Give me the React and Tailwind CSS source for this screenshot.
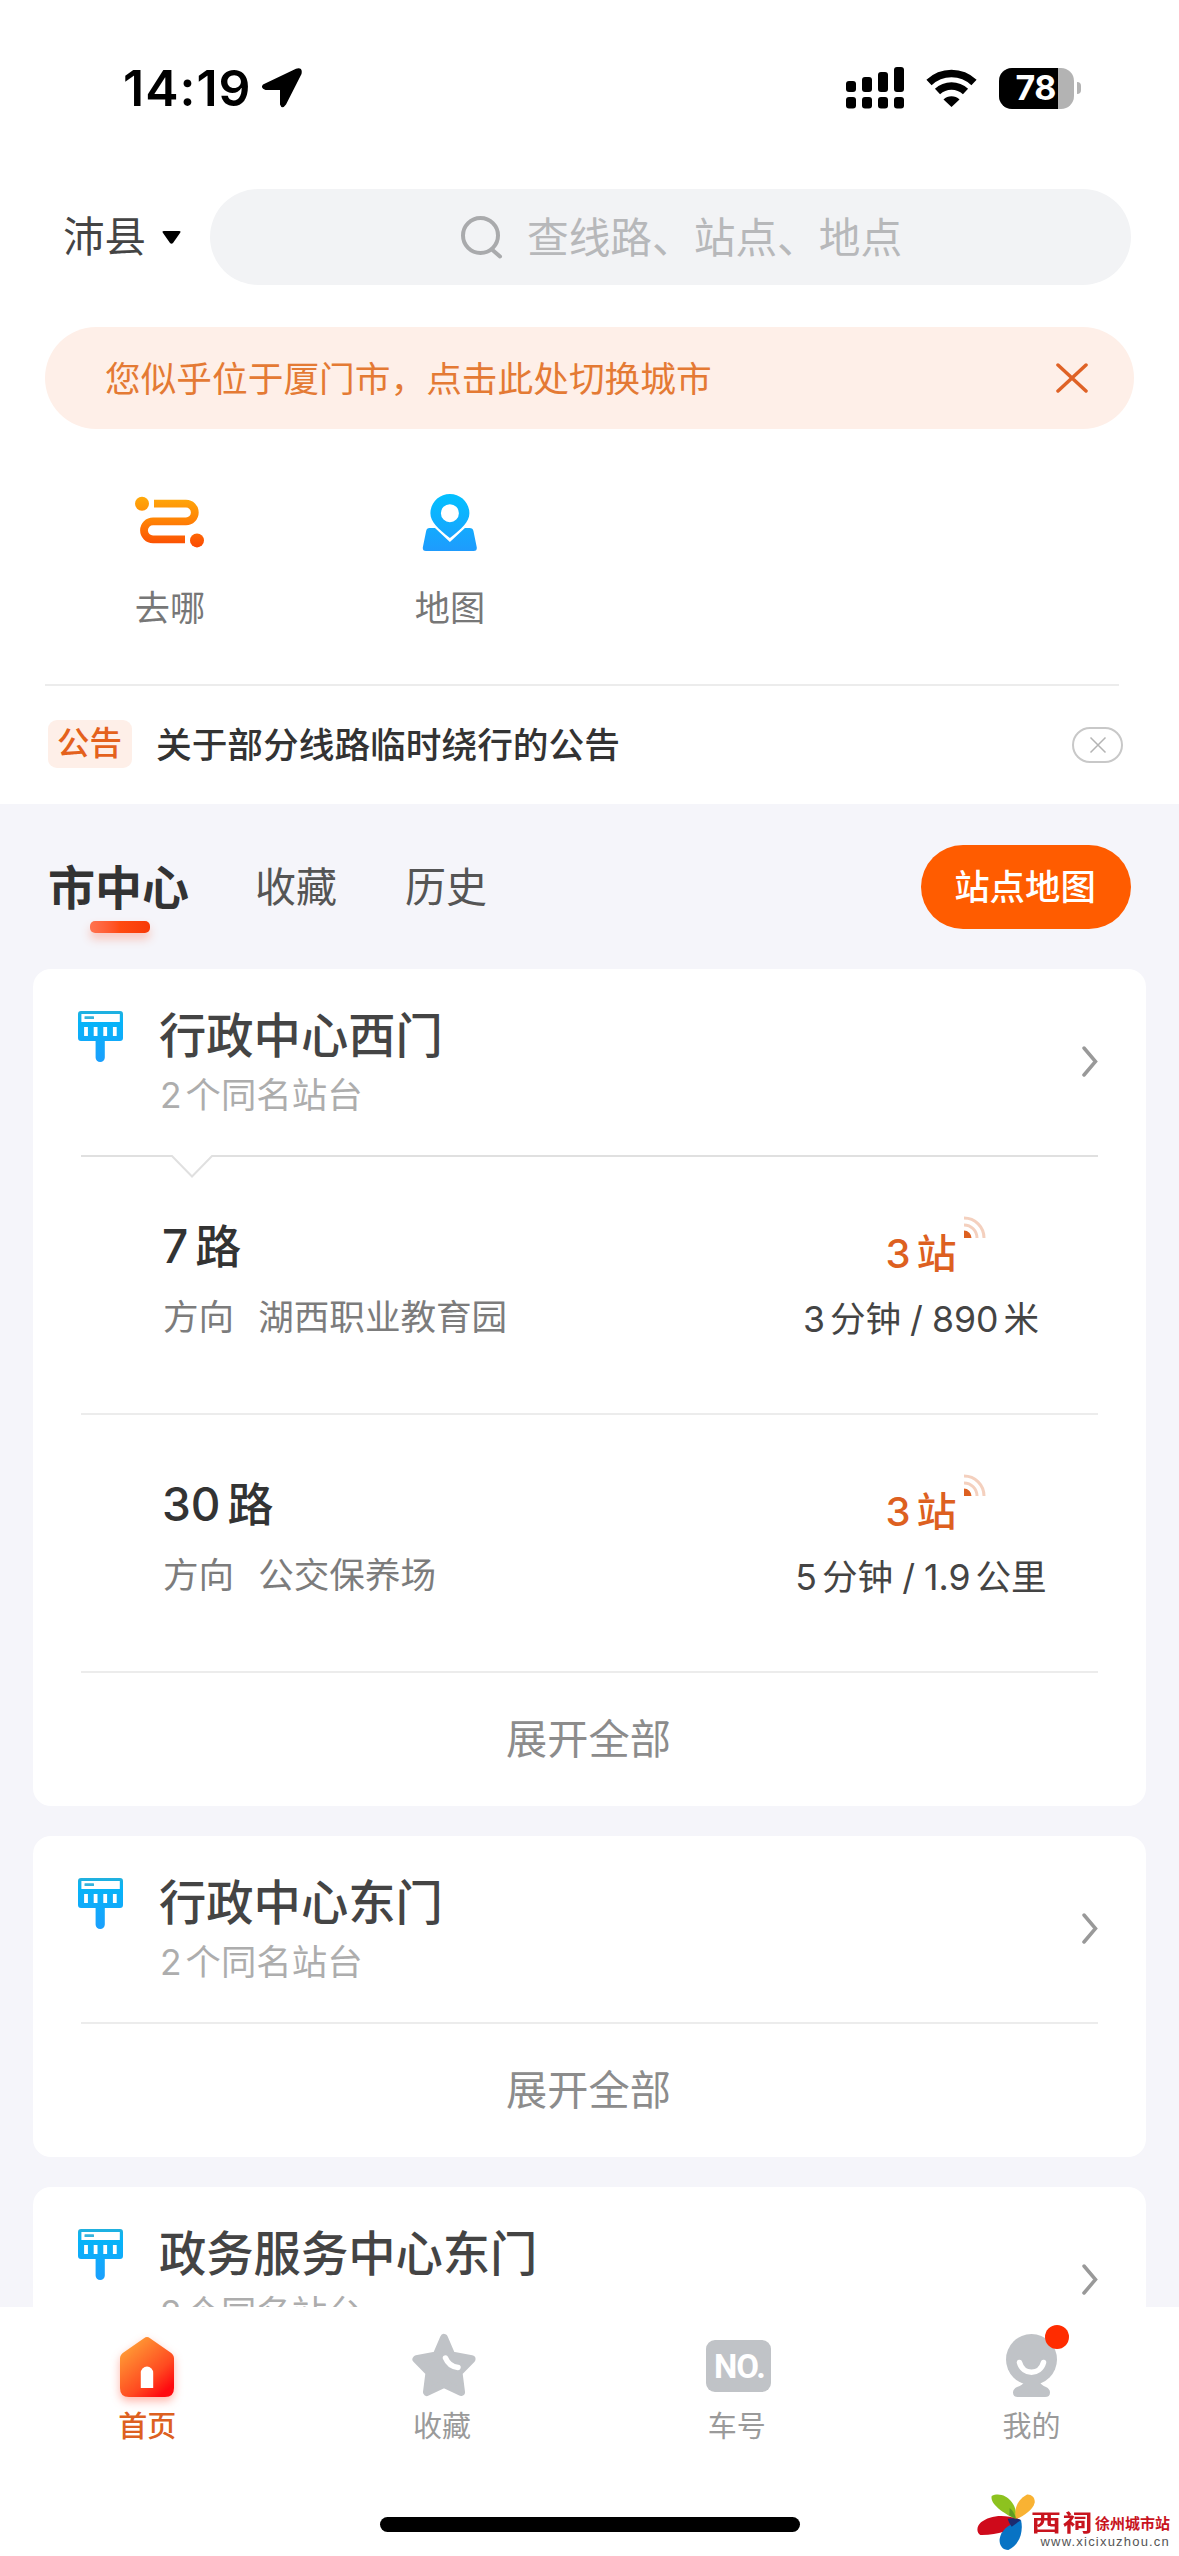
const quickEntries = [
  { label: '去哪', Icon: RouteIcon },
  { label: '地图', Icon: MapIcon },
]

const stations = [
  {
    name: '行政中心西门',
    platforms: '2',
    lines: [
      { no: '7', to: '湖西职业教育园', stops: '3', minutes: '3', distance: '890', unit: '米' },
      { no: '30', to: '公交保养场', stops: '3', minutes: '5', distance: '1.9', unit: '公里' },
    ],
    expandable: true,
  },
  { name: '行政中心东门', platforms: '2', lines: [], expandable: true },
  { name: '政务服务中心东门', platforms: '2', lines: [], expandable: false },
]

const navItems = [
  { label: '首页', Icon: HomeIcon, active: true },
  { label: '收藏', Icon: StarIcon },
  { label: '车号', Icon: NumberIcon },
  { label: '我的', Icon: ProfileIcon, dot: true },
]

function RouteIcon() {
  return (
    <svg width="72" height="58" viewBox="134 493 72 58" fill="none">
      <defs>
        <linearGradient id="route" gradientUnits="userSpaceOnUse" x1="0" y1="497" x2="0" y2="547">
          <stop offset="0" stopColor="#ffa90a" />
          <stop offset="0.5" stopColor="#ff8005" />
          <stop offset="1" stopColor="#fb4a03" />
        </linearGradient>
      </defs>
      <circle cx="142" cy="503.7" r="7" fill="url(#route)" />
      <circle cx="197" cy="540.4" r="7" fill="url(#route)" />
      <path d="M154 503.7H186a8.8 8.8 0 0 1 0 17.6H153a9 9 0 0 0 0 18H185" stroke="url(#route)" strokeWidth="7.8" />
    </svg>
  )
}

function MapIcon() {
  return (
    <svg width="56" height="58" viewBox="421.5 493 56 58" fill="none">
      <defs>
        <linearGradient id="map" gradientUnits="userSpaceOnUse" x1="0" y1="494" x2="0" y2="551">
          <stop offset="0" stopColor="#02c0ff" />
          <stop offset="1" stopColor="#1f9bfd" />
        </linearGradient>
      </defs>
      <path d="M430 528h4.500L449.400 542l15-14h4.600q3.400 0 4 3.200l3.300 16.300q.3 3.500-3.200 3.500h-47.600q-3.500 0-3.200-3.500l3.300-16.300q.6-3.200 3.400-3.200z" fill="url(#map)" />
      <path
        fillRule="evenodd"
        d="M449.400 494c10.800 0 19.500 8.600 19.500 19.200 0 9-8 15.500-19.500 24.800-11.500-9.300-19.500-15.800-19.500-24.800 0-10.600 8.700-19.200 19.500-19.200zm0 10.200a9 9 0 1 0 0 18 9 9 0 0 0 0-18z"
        fill="url(#map)"
      />
    </svg>
  )
}

function StopIcon() {
  return (
    <svg className="mt-[42px] shrink-0" width="45" height="51" viewBox="0 0 45 51">
      <defs>
        <linearGradient id="stop" x1="0" y1="0" x2="0" y2="1">
          <stop offset="0" stopColor="#22b0dd" />
          <stop offset="0.2" stopColor="#06b4f8" />
          <stop offset="1" stopColor="#1b9ffd" />
        </linearGradient>
      </defs>
      <path d="M3 0h39q3 0 3 3v24q0 3-3 3H26.800v16.500a4.600 4.500 0 0 1-9.200 0V30H3q-3 0-3-3V3q0-3 3-3z" fill="url(#stop)" />
      <rect x="3.400" y="3" width="38.400" height="8" fill="#fff" />
      <rect x="6.500" y="5.300" width="9.500" height="2.800" rx="0.500" fill="#35b3dc" />
      {[6.1, 15.7, 25.3, 34.9].map((x) => (
        <rect key={x} x={x} y="16" width="3.800" height="9" fill="#fff" />
      ))}
    </svg>
  )
}

function HomeIcon() {
  return (
    <svg className="overflow-visible" width="54" height="64" viewBox="0 0 54 64">
      <defs>
        <linearGradient id="home" x1="0.200" y1="0.100" x2="0.900" y2="1">
          <stop offset="0" stopColor="#ff9a35" />
          <stop offset="0.600" stopColor="#ff4a20" />
          <stop offset="0.900" stopColor="#ff0a10" />
        </linearGradient>
      </defs>
      <path
        className="drop-shadow-[0_4px_5px_rgba(255,70,40,0.4)]"
        d="M24 5.200q3-2.400 6 0L50.500 19.500q3.500 2.500 3.500 6V55q0 9-9 9H9q-9 0-9-9V25.500q0-3.500 3.500-6z"
        fill="url(#home)"
      />
      <path d="M20.800 55V39.800a6.200 6.200 0 0 1 12.400 0V55z" fill="#fff" />
    </svg>
  )
}

function StarIcon() {
  return (
    <svg className="ml-1" width="64" height="64" viewBox="0 0 64 64" fill="none">
      <path
        d="M32 5L39.500 22.500 59.500 26.300 46.500 39.500 49 59 32 51 15 59 17.500 39.500 4.500 26.300 24.500 22.500z"
        fill="#c0c3c7"
        stroke="#c0c3c7"
        strokeWidth="8"
        strokeLinejoin="round"
      />
      <path d="M33.500 25q3.500 8.500 12.500 9.500" stroke="#fff" strokeWidth="5.500" strokeLinecap="round" />
    </svg>
  )
}

function NumberIcon() {
  return (
    <div className="mb-[5px] ml-[3px] flex h-[52px] w-[65px] items-center justify-center rounded-[9px] bg-[#c0c3c7] pl-[2px] font-['Roboto','Inter',sans-serif] text-[33px] leading-none font-bold tracking-[-1px] text-white">
      NO.
    </div>
  )
}

function ProfileIcon() {
  return (
    <svg width="51" height="63" viewBox="0 0 51 63" fill="none">
      <circle cx="25.500" cy="25.500" r="25.500" fill="#c0c3c7" />
      <path d="M18 48h16q1 3 6 5 4 2 4 5.500 0 4.500-5 4.500H12q-5 0-5-4.500Q7 55 11 53q6-2 7-5z" fill="#c0c3c7" />
      <path d="M13.500 28.500c3.500 13 20.500 13 24 0" stroke="#fff" strokeWidth="5.500" strokeLinecap="round" />
    </svg>
  )
}

function StatusBar() {
  return (
    <div className="flex h-[176px] items-center pr-[98px] pl-[123px]">
      <span className="w-[139px] text-[50px] leading-none font-semibold tracking-[1px] text-black">14:19</span>
      <svg width="40" height="40" viewBox="0 0 40 40">
        <path d="M34 .7Q41-1 39.500 6L24 36.500Q20 42 18 36.500V22H3.500Q-2 20 1 16.500z" />
      </svg>
      <svg className="ml-auto" width="58" height="42" viewBox="0 0 58 42">
        {[
          [0, 14],
          [16, 10],
          [32, 5],
          [48, 0],
        ].map(([x, y]) => (
          <g key={x}>
            <rect x={x} y={y} width="10" height={25 - y} rx="3" />
            <rect x={x} y="30" width="10" height="11.500" rx="3" />
          </g>
        ))}
      </svg>
      <svg className="ml-[22px]" width="51" height="38" viewBox="0 0 51 38" fill="none">
        <path d="M3 13.500a32.500 32.500 0 0 1 45 0" stroke="#000" strokeWidth="7.500" />
        <path d="M11.500 22.500a20.500 20.500 0 0 1 28 0" stroke="#000" strokeWidth="7.500" />
        <path d="M17.500 30.500a11.500 11.500 0 0 1 16 0L25.500 38z" fill="#000" />
      </svg>
      <div className="ml-[22px] flex h-[41px] w-[75px] items-center overflow-hidden rounded-[13px] bg-[#b3b3b3]">
        <div className="flex h-full w-[59px] items-center justify-end bg-black pr-0.5 text-[34px] leading-none font-bold tracking-[-0.5px] text-white">
          78
        </div>
      </div>
      <div className="ml-[3px] h-3 w-1 rounded-r-full bg-[#b3b3b3]" />
    </div>
  )
}

function SearchRow() {
  return (
    <div className="mt-[13px] flex h-24 items-center pr-12 pl-[63px]">
      <span className="pt-[2px] text-[41.500px] leading-none text-[#444]">沛县</span>
      <svg className="ml-4" width="19" height="13" viewBox="0 0 19 13">
        <path d="M2 0h15q2.500 0 1 2L11 12q-1.500 1.500-3 0L1 2Q-.5 0 2 0z" />
      </svg>
      <div className="ml-auto flex h-24 w-[921px] items-center rounded-full bg-[#f2f3f5] pl-[251px]">
        <svg width="42" height="43" viewBox="0 0 42 43" fill="none" stroke="#a9aaac" strokeWidth="4">
          <circle cx="19.500" cy="19.500" r="17.500" />
          <path d="M31.500 34l7.500 6.500" strokeLinecap="round" />
        </svg>
        <span className="ml-6 pt-[3px] text-[41.700px] leading-none text-[#b7b8ba]">查线路、站点、地点</span>
      </div>
    </div>
  )
}

function CityBanner() {
  return (
    <div className="mt-[42px] mr-[45px] ml-[45px] flex h-[102px] items-center justify-between rounded-full bg-[#feefe8] pr-[46px] pl-[60px]">
      <span className="pt-[3px] text-[35.700px] leading-none text-[#e47a34]">您似乎位于厦门市，点击此处切换城市</span>
      <svg width="32" height="30" viewBox="0 0 32 30" stroke="#df6226" strokeWidth="3.500" strokeLinecap="round">
        <path d="M2 2l28 26M30 2L2 28" />
      </svg>
    </div>
  )
}

function Notice() {
  return (
    <div className="flex h-[118px] items-center pr-14 pl-12">
      <span className="mb-[2px] flex h-12 w-[84px] items-center justify-center rounded-[9px] bg-[#feefe8] pr-px text-[32.500px] leading-none font-medium text-[#e4611c]">
        公告
      </span>
      <span className="ml-6 pt-[2px] text-[35.700px] leading-none font-medium text-[#333]">关于部分线路临时绕行的公告</span>
      <span className="ml-auto flex h-9 w-[51px] items-center justify-center rounded-full border-2 border-[#c8c8c8]">
        <svg width="18" height="18" viewBox="0 0 18 18" stroke="#b4b4b4" strokeWidth="1.500">
          <path d="M1.500 1.500l15 15M16.500 1.500l-15 15" />
        </svg>
      </span>
    </div>
  )
}

function Tabs() {
  return (
    <div className="flex h-[165px] items-center pr-12 pl-12 text-[41px] leading-none text-[#555]">
      <span className="relative pt-[2px] text-[47px] font-bold text-[#333]">
        市中心
        <span className="absolute top-[59px] left-[42px] h-3 w-[60px] rounded-[5px] bg-linear-to-r from-[#ff7350] via-[#ff4a10] to-[#f73a08] shadow-[0_6px_10px_rgba(255,90,50,0.3)]" />
      </span>
      <span className="ml-[66px] pt-[2px]">收藏</span>
      <span className="ml-[68px] pt-[2px]">历史</span>
      <button type="button" className="ml-auto h-[84px] w-[210px] rounded-full bg-[#ff5c00] pt-[3px] pr-[2px] text-[35.400px] leading-none font-medium text-white">
        站点地图
      </button>
    </div>
  )
}

function LineRow({ line }) {
  return (
    <div className="mr-12 ml-12 flex h-[258px] border-b-2 border-[#ececec] pl-[81px]">
      <div className="pt-[59px]">
        <p className="flex items-center gap-[7px] text-[46px] leading-[60px] font-medium text-[#333]">
          <span>{line.no}</span>
          <span>路</span>
        </p>
        <p className="mt-[17px] flex gap-6 pl-px text-[35.600px] leading-[50px] text-[#7c7c7c]">
          <span>方向</span>
          <span>{line.to}</span>
        </p>
      </div>
      <div className="ml-auto w-[354px] pt-[72px] text-center">
        <p className="relative flex items-center justify-center gap-1.5 text-[40px] leading-[50px] font-medium text-[#dd6020]">
          <span>{line.stops}</span>
          <span>站</span>
          <svg className="absolute top-[-13px] left-[220px]" width="22" height="22" viewBox="0 0 22 22" fill="none">
            <path d="M0 14.500A7.500 7.500 0 0 1 7.500 22H0z" fill="#dd6020" />
            <path d="M0 9a13 13 0 0 1 13 13M0 2a20 20 0 0 1 20 20" stroke="#f4d0be" strokeWidth="3" />
          </svg>
        </p>
        <p className="mt-4 flex justify-center gap-[5px] text-[35.600px] leading-[50px] text-[#444]">
          <span>{line.minutes}</span>
          <span>分钟</span>
          <span className="mx-1">/</span>
          <span>{line.distance}</span>
          <span>{line.unit}</span>
        </p>
      </div>
    </div>
  )
}

function StationCard({ station }) {
  const hasLines = station.lines.length > 0

  return (
    <section className="mb-[30px] rounded-[18px] bg-white">
      <div className="flex h-[186px] pr-12 pl-[45px]">
        <StopIcon />
        <div className="ml-9 pt-[37px]">
          <h2 className="text-[47.300px] leading-[60px] font-medium text-[#444]">{station.name}</h2>
          <p className="mt-[10px] flex gap-1 pl-px text-[35.400px] leading-10 text-[#adadad]">
            <span>{station.platforms}</span>
            <span>个同名站台</span>
          </p>
        </div>
        <svg className="mt-[77px] ml-auto" width="16" height="31" viewBox="0 0 16 31" fill="none">
          <path d="M2 2l11.500 13.500L2 29" stroke="#999" strokeWidth="3.500" strokeLinecap="round" />
        </svg>
      </div>
      {hasLines ? (
        <svg className="-mb-[21px] ml-12 block" width="1017" height="23" viewBox="0 0 1017 23" fill="none">
          <path d="M0 1h91l20 20.500L131 1h886" stroke="#e0e0e0" strokeWidth="2" />
        </svg>
      ) : (
        <div className="mx-12 h-0.5 bg-[#ececec]" />
      )}
      {station.lines.map((line) => (
        <LineRow key={line.no} line={line} />
      ))}
      {station.expandable && (
        <div className="flex h-[133px] items-center justify-center pr-[2px] text-[41.200px] leading-none text-[#8c8c8c]">展开全部</div>
      )}
    </section>
  )
}

function BottomNav() {
  return (
    <nav className="h-[249px] bg-white">
      <div className="grid grid-cols-4 pt-[26px]">
        {navItems.map(({ label, Icon, active, dot }) => (
          <div key={label} className="flex flex-col items-center">
            <div className="relative flex h-16 items-end">
              <Icon />
              {dot && <span className="absolute -top-2 left-[39px] size-6 rounded-full bg-[#ff2c00]" />}
            </div>
            <span
              className={
                active
                  ? 'mt-[10px] text-[29px] leading-10 font-medium text-[#dd6020]'
                  : 'mt-[10px] text-[29px] leading-10 text-[#9a9a9a]'
              }
            >
              {label}
            </span>
          </div>
        ))}
      </div>
      <div className="mx-auto mt-[70px] h-[15px] w-[420px] rounded-full bg-black" />
    </nav>
  )
}

function SiteMark() {
  return (
    <div className="absolute right-[9px] bottom-0 flex h-[68px] items-start">
      <svg className="mt-1 mr-[-4px]" width="58" height="60" viewBox="20 36 174 180">
        <path d="M137 118C100 100 58 72 64 48c20-10 45-2 60 18 12 16 16 34 13 52z" fill="#8dc21f" />
        <path d="M137 118c-8-30 5-60 32-74 14-2 26 10 24 24-6 22-28 36-56 50z" fill="#f9b233" />
        <path d="M150 120c-20 28-60 46-120 45-12-8-12-26 2-38 26-22 74-26 118-7z" fill="#cf0a1b" />
        <path d="M152 120c8 34-4 74-38 90-18 0-28-14-26-34 4-24 26-44 64-56z" fill="#0873c4" />
        <path d="M112 116q20-4 40 4-14 10-28 20-8-10-12-24z" fill="#1c2a6e" />
        <path d="M118 84q14 10 19 34l-20-12z" fill="#5f9a22" />
      </svg>
      <div className="mt-6 flex w-[139px] flex-col">
        <div className="flex h-[22px] items-center text-[#c8141e]">
          <span className="w-16 shrink-0 scale-y-75 text-[30px] leading-none font-bold tracking-[1.500px] whitespace-nowrap">西祠</span>
          <span className="text-[15px] leading-none font-bold">徐州城市站</span>
        </div>
        <span className="text-right font-['Liberation_Sans',sans-serif] text-[13px] leading-[15px] tracking-[1.200px] whitespace-nowrap text-[#555]">
          www.xicixuzhou.cn
        </span>
      </div>
    </div>
  )
}

export default function App() {
  return (
    <div
      lang="zh-CN"
      className="relative h-[2556px] w-[1179px] overflow-hidden bg-white font-['Inter','Noto_Sans_CJK_SC',sans-serif]"
    >
      <header className="h-[804px]">
        <StatusBar />
        <SearchRow />
        <CityBanner />
        <div className="flex h-[255px] pt-16 pl-[30px]">
          {quickEntries.map(({ label, Icon }) => (
            <div key={label} className="flex w-[280px] flex-col items-center">
              <Icon />
              <span className="mt-8 text-[35.200px] leading-[50px] text-[#777]">{label}</span>
            </div>
          ))}
        </div>
        <div className="mr-[60px] ml-[45px] h-0.5 bg-[#ececec]" />
        <Notice />
      </header>
      <main className="h-[1503px] overflow-hidden bg-[#f5f5fa]">
        <Tabs />
        <div className="px-[33px]">
          {stations.map((station) => (
            <StationCard key={station.name} station={station} />
          ))}
        </div>
      </main>
      <BottomNav />
      <SiteMark />
    </div>
  )
}
